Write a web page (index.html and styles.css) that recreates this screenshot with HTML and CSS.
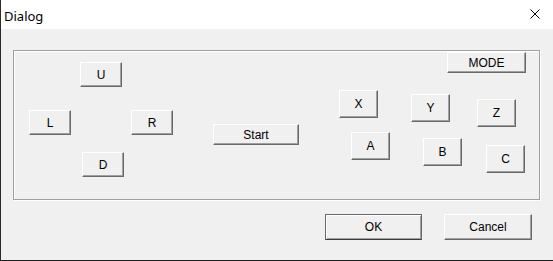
FILE: index.html
```html
<!DOCTYPE html>
<html lang="en">
<head>
    <meta charset="UTF-8">
    <title>Dialog</title>
    <link rel="stylesheet" href="styles.css">
</head>
<body>
    <div class="window">
        <div class="titlebar">
            <span class="title">Dialog</span>
            <svg class="close" width="10" height="10" viewBox="0 0 10 10">
                <path d="M0.5 0.5 L9.5 9.5 M9.5 0.5 L0.5 9.5" stroke="#000" stroke-width="1"/>
            </svg>
        </div>

        <div class="group">
            <button class="btn pad-u">U</button>
            <button class="btn pad-l">L</button>
            <button class="btn pad-r">R</button>
            <button class="btn pad-d">D</button>
            <button class="btn start">Start</button>
            <button class="btn mode">MODE</button>
            <button class="btn key key-x">X</button>
            <button class="btn key key-y">Y</button>
            <button class="btn key key-z">Z</button>
            <button class="btn key key-a">A</button>
            <button class="btn key key-b">B</button>
            <button class="btn key key-c">C</button>
        </div>

        <div class="footer">
            <button class="btn ok">OK</button>
            <button class="btn cancel">Cancel</button>
        </div>
    </div>
</body>
</html>
```

FILE: styles.css
```css
body {
    margin: 0;
    background: #202020;
    font-family: 'Liberation Sans', Arial, sans-serif;
}

.window {
    height: 260px;
    background: #f0f0f0;
    border-left: 1px solid #2b2b2b;
    display: flex;
    flex-direction: column;
}

.titlebar {
    height: 29px;
    background: #fff;
    display: flex;
    align-items: center;
    justify-content: space-between;
    padding: 0 13px 0 3px;
}

.title {
    font-family: 'Noto Sans', sans-serif;
    font-size: 13px;
    color: #000;
    margin-top: 2px;
}

.close {
    margin-top: -2px;
}

.group {
    position: relative;
    margin: 21px 0 0 12px;
    width: 525px;
    height: 148px;
    border: 1px solid #a0a0a0;
    box-shadow: inset 1px 1px 0 #fff, 1px 1px 0 #fff;
}

.btn {
    font-family: 'Liberation Sans', Arial, sans-serif;
    font-size: 12px;
    color: #000;
    background: #f0f0f0;
    border: 1px solid;
    border-color: #fff #696969 #696969 #fff;
    box-shadow: inset -1px -1px 0 #a0a0a0;
    padding: 0;
    margin: 0;
    box-sizing: border-box;
}

.group .btn {
    position: absolute;
    width: 42px;
    height: 25px;
}

.pad-u { left: 66px; top: 11px; }
.pad-l { left: 15px; top: 59px; }
.pad-r { left: 117px; top: 59px; }
.pad-d { left: 68px; top: 101px; }

.group .start {
    left: 199px;
    top: 73px;
    width: 86px;
    height: 21px;
}

.group .mode {
    left: 433px;
    top: 1px;
    width: 79px;
    height: 21px;
}

.group .key {
    width: 39px;
    height: 28px;
}

.key-x { left: 325px; top: 39px; }
.key-y { left: 397px; top: 43px; }
.key-z { left: 463px; top: 48px; }
.key-a { left: 337px; top: 81px; }
.key-b { left: 409px; top: 87px; }
.key-c { left: 472px; top: 94px; }

.footer {
    display: flex;
    justify-content: flex-end;
    gap: 22px;
    padding: 14px 21px 0 0;
}

.footer .btn {
    height: 26px;
}

.ok {
    width: 97px;
    border-color: #696969 #696969 #3c3c3c #696969;
    box-shadow: inset 1px 1px 0 #fff, inset -1px -1px 0 #a0a0a0;
}

.cancel {
    width: 88px;
}
```
